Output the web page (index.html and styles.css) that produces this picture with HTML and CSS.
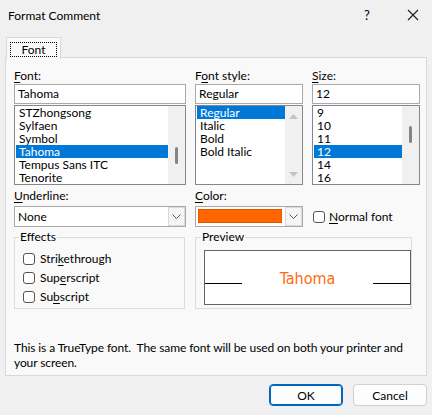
FILE: index.html
```html
<!DOCTYPE html>
<html lang="en">
<head>
    <meta charset="UTF-8">
    <meta name="viewport" content="width=device-width, initial-scale=1.0">
    <title>Format Comment</title>
    <link rel="stylesheet" href="styles.css">
</head>
<body>

<div class="titlebar">
    <span class="title">Format Comment</span>
    <span class="help">?</span>
    <span class="close">
        <svg width="12" height="12" viewBox="0 0 12 12"><path d="M1 1 L11 11 M11 1 L1 11" stroke="#1a1a1a" stroke-width="1.1" fill="none"/></svg>
    </span>
</div>

<div class="tabs">
    <div class="tab"><span class="focus">Font</span></div>
</div>

<div class="panel">
    <!-- Font / style / size pickers -->
    <div class="pickers">
        <div class="field field-wide">
            <div class="label"><u>F</u>ont:</div>
            <div class="input">Tahoma</div>
            <div class="list">
                <div class="items">
                    <div class="row">STZhongsong</div>
                    <div class="row">Sylfaen</div>
                    <div class="row">Symbol</div>
                    <div class="row selected">Tahoma</div>
                    <div class="row">Tempus Sans ITC</div>
                    <div class="row">Tenorite</div>
                </div>
                <div class="scroll"><div class="thumb thumb-font"></div></div>
            </div>
        </div>
        <div class="field">
            <div class="label">F<u>o</u>nt style:</div>
            <div class="input">Regular</div>
            <div class="list">
                <div class="items">
                    <div class="row selected">Regular</div>
                    <div class="row">Italic</div>
                    <div class="row">Bold</div>
                    <div class="row">Bold Italic</div>
                </div>
                <div class="scroll scroll-arrows">
                    <svg width="9" height="5" viewBox="0 0 9 5"><path d="M0 5 L4.5 0 L9 5 Z" fill="#c4c4c4"/></svg>
                    <svg width="9" height="5" viewBox="0 0 9 5"><path d="M0 0 L4.5 5 L9 0 Z" fill="#c4c4c4"/></svg>
                </div>
            </div>
        </div>
        <div class="field">
            <div class="label"><u>S</u>ize:</div>
            <div class="input">12</div>
            <div class="list">
                <div class="items">
                    <div class="row">9</div>
                    <div class="row">10</div>
                    <div class="row">11</div>
                    <div class="row selected">12</div>
                    <div class="row">14</div>
                    <div class="row">16</div>
                </div>
                <div class="scroll"><div class="thumb thumb-size"></div></div>
            </div>
        </div>
    </div>

    <!-- Underline / colour -->
    <div class="options">
        <div class="field field-wide">
            <div class="label"><u>U</u>nderline:</div>
            <div class="select">
                <span class="value">None</span>
                <span class="drop"><svg width="9" height="5" viewBox="0 0 9 5"><path d="M0.5 0.5 L4.5 4.5 L8.5 0.5" stroke="#5a5a5a" fill="none"/></svg></span>
            </div>
        </div>
        <div class="field">
            <div class="label"><u>C</u>olor:</div>
            <div class="select">
                <span class="swatch"></span>
                <span class="drop"><svg width="9" height="5" viewBox="0 0 9 5"><path d="M0.5 0.5 L4.5 4.5 L8.5 0.5" stroke="#5a5a5a" fill="none"/></svg></span>
            </div>
        </div>
        <label class="check check-normal"><span class="box"></span><span><u>N</u>ormal font</span></label>
    </div>

    <!-- Effects and preview -->
    <div class="groups">
        <fieldset class="group group-effects">
            <legend>Effects</legend>
            <label class="check"><span class="box"></span><span>Stri<u>k</u>ethrough</span></label>
            <label class="check"><span class="box"></span><span>Sup<u>e</u>rscript</span></label>
            <label class="check"><span class="box"></span><span>Su<u>b</u>script</span></label>
        </fieldset>
        <fieldset class="group group-preview">
            <legend>Preview</legend>
            <div class="sample-box">
                <span class="rule"></span>
                <span class="sample">Tahoma</span>
                <span class="rule rule-right"></span>
            </div>
        </fieldset>
    </div>

    <p class="note">This is a TrueType font.&nbsp; The same font will be used on both your printer and<br>your screen.</p>
</div>

<div class="buttons">
    <button class="btn btn-default">OK</button>
    <button class="btn">Cancel</button>
</div>

</body>
</html>
```

FILE: styles.css
```css
* {
    box-sizing: border-box;
}
body {
    margin: 0;
    width: 432px;
    height: 415px;
    overflow: hidden;
    background-color: #f0f0f0;
    font-family: Lato, "Noto Sans", sans-serif;
    font-size: 12px;
    color: #000;
}
u {
    text-decoration-thickness: 1px;
    text-underline-offset: 2px;
}

/* title bar */
.titlebar {
    height: 30px;
    display: flex;
    align-items: center;
    padding: 0 9px 0 8px;
}
.titlebar .title {
    flex: 1;
}
.help {
    width: 20px;
    text-align: center;
    font-size: 13px;
}
.close {
    width: 20px;
    margin-left: 26px;
    display: flex;
    justify-content: center;
}

/* tab strip */
.tabs {
    height: 28px;
    padding: 7px 0 0 6px;
    margin-bottom: -1px;
}
.tab {
    position: relative;
    width: 55px;
    height: 22px;
    padding: 4px 0 0 3px;
    background-color: #f9f9f9;
    border: 1px solid #d9d9d9;
    border-bottom: none;
}
.focus {
    display: block;
    width: 47px;
    height: 15px;
    line-height: 13px;
    text-align: center;
    border: 1px dotted #000;
}

.panel {
    width: 422px;
    height: 319px;
    margin-left: 5px;
    padding: 10px 0 0 8px;
    background-color: #f9f9f9;
    border: 1px solid #d9d9d9;
}

/* pickers */
.pickers,
.options {
    display: flex;
    gap: 9px;
}
.field {
    width: 108px;
}
.field-wide {
    width: 172px;
}
.label {
    height: 16px;
    line-height: 16px;
}
.input {
    height: 20px;
    line-height: 18px;
    padding-left: 3px;
    background-color: #fff;
    border: 1px solid #a9a9a9;
}
.list {
    display: flex;
    height: 80px;
    margin-top: 1px;
    background-color: #fff;
    border: 1px solid #828790;
}
.items {
    flex: 1;
    padding-left: 1px;
}
.row {
    height: 13px;
    line-height: 13px;
    padding-left: 3px;
    white-space: nowrap;
}
.row.selected {
    background-color: #0078d7;
    color: #fff;
}
.scroll {
    width: 17px;
    background-color: #f0f0f0;
    display: flex;
    flex-direction: column;
    align-items: center;
}
.thumb {
    width: 3px;
    height: 17px;
    background-color: #858585;
    border-radius: 2px;
}
.thumb-font {
    margin-top: 41px;
}
.thumb-size {
    margin-top: 20px;
}
.scroll-arrows {
    justify-content: space-between;
    padding: 8px 0 7px;
}

/* underline / colour */
.options {
    margin-top: 3px;
    align-items: flex-end;
}
.options .label {
    margin-bottom: 2px;
}
.select {
    display: flex;
    height: 21px;
    background-color: #fff;
    border: 1px solid #a9a9a9;
}
.select .value {
    flex: 1;
    line-height: 19px;
    padding-left: 3px;
}
.drop {
    width: 17px;
    display: flex;
    align-items: center;
    justify-content: center;
    background-color: #f5f5f5;
    border: 1px solid #dadada;
}
.swatch {
    width: 87px;
    height: 14px;
    margin: 2px 3px 0 2px;
    background-color: #ff6600;
    border: 1px solid #e05800;
}
.check {
    display: flex;
    align-items: center;
    gap: 5px;
    height: 19px;
}
.check-normal {
    height: 21px;
    margin-left: 1px;
    gap: 4px;
}
.box {
    width: 12px;
    height: 12px;
    background-color: #fff;
    border: 1px solid #555;
    border-radius: 3px;
}

/* group boxes */
.groups {
    display: flex;
    gap: 10px;
    margin-top: 3px;
}
.group {
    margin: 0;
    padding: 0;
    height: 79px;
    border: 1px solid #dcdcdc;
}
.group legend {
    margin-left: 4px;
    padding: 0 1px;
    line-height: 14px;
}
.group-effects {
    width: 171px;
    padding-top: 5px;
}
.group-effects .check {
    margin-left: 8px;
}
.group-preview {
    width: 215px;
    padding-top: 6px;
}
.group-preview legend {
    margin-left: 5px;
}
.sample-box {
    display: flex;
    align-items: flex-end;
    width: 207px;
    height: 55px;
    margin-left: 8px;
    padding-bottom: 20px;
    background-color: #fff;
    border: 1px solid #646464;
}
.rule {
    width: 37px;
    height: 1px;
    background-color: #000;
}
.sample {
    flex: 1;
    text-align: center;
    font-family: "DejaVu Sans", sans-serif;
    font-stretch: condensed;
    font-size: 16px;
    line-height: 16px;
    margin-bottom: -3px;
    color: #ff6a10;
}

.note {
    margin: 31px 0 0 0;
    line-height: 15px;
    letter-spacing: -0.1px;
    white-space: nowrap;
}

/* dialog buttons */
.buttons {
    display: flex;
    justify-content: flex-end;
    gap: 10px;
    padding: 8px 5px 0 0;
}
.btn {
    width: 74px;
    height: 22px;
    padding: 0;
    font-family: Lato, "Noto Sans", sans-serif;
    font-size: 12px;
    color: #000;
    background-color: #fdfdfd;
    border: 1px solid #d0d0d0;
    border-radius: 4px;
}
.btn-default {
    border: 1px solid #0067c0;
    box-shadow: inset 0 0 0 1px #0067c0;
}
```
